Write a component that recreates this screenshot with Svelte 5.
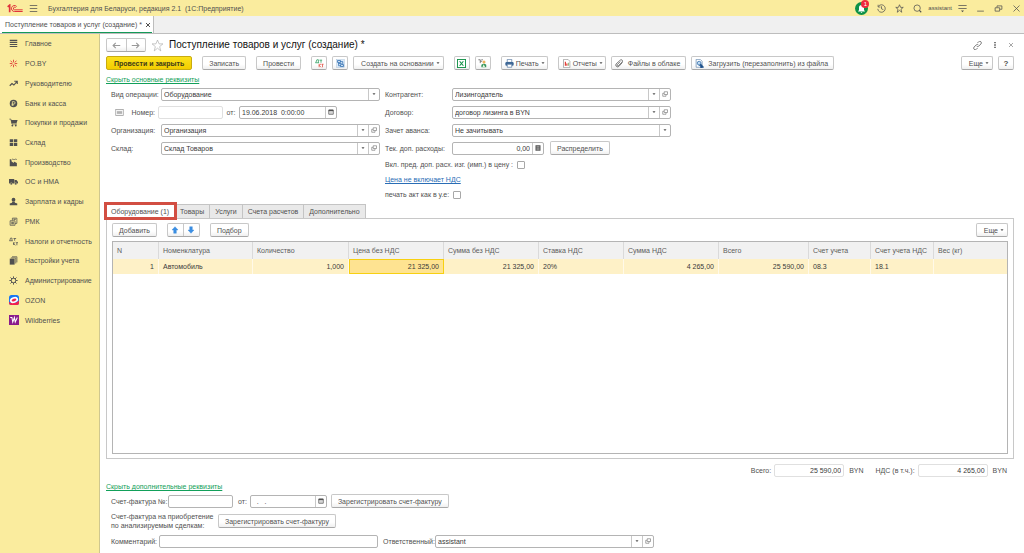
<script lang="ts">
  const sections = [
    { icon: 'lines', label: 'Главное' },
    { icon: 'spark', label: 'PO.BY' },
    { icon: 'trend', label: 'Руководителю' },
    { icon: 'coin', label: 'Банк и касса' },
    { icon: 'cart', label: 'Покупки и продажи' },
    { icon: 'store', label: 'Склад' },
    { icon: 'factory', label: 'Производство' },
    { icon: 'truck', label: 'ОС и НМА' },
    { icon: 'person', label: 'Зарплата и кадры' },
    { icon: 'register', label: 'РМК' },
    { icon: 'tax', label: 'Налоги и отчетность' },
    { icon: 'books', label: 'Настройки учета' },
    { icon: 'gear', label: 'Администрирование' },
    { icon: 'ozon', label: 'OZON' },
    { icon: 'wb', label: 'Wildberries' }
  ];

  const tabs = ['Оборудование (1)', 'Товары', 'Услуги', 'Счета расчетов', 'Дополнительно'];

  const columns = [
    { title: 'N', width: 46, value: '1', num: true },
    { title: 'Номенклатура', width: 94, value: 'Автомобиль' },
    { title: 'Количество', width: 96, value: '1,000', num: true },
    { title: 'Цена без НДС', width: 95, value: '21 325,00', num: true, current: true },
    { title: 'Сумма без НДС', width: 95, value: '21 325,00', num: true },
    { title: 'Ставка НДС', width: 85, value: '20%' },
    { title: 'Сумма НДС', width: 95, value: '4 265,00', num: true },
    { title: 'Всего', width: 90, value: '25 590,00', num: true },
    { title: 'Счет учета', width: 62, value: '08.3' },
    { title: 'Счет учета НДС', width: 63, value: '18.1' },
    { title: 'Вес (кг)', width: 73, value: '' }
  ];

  let activeTab = $state(0);
</script>

{#snippet icon(name: string)}
  <svg
    class={['icon', name]}
    viewBox="0 0 24 24"
    fill="none"
    stroke="currentColor"
    stroke-width="2"
    aria-hidden="true"
  >
    {#if name === 'lines'}
      <path d="M2 3.500h20M2 9h20M2 14.500h20M2 20h20" stroke-width="3" />
    {:else if name === 'burger'}
      <path d="M2 4h20M2 12h20M2 20h20" />
    {:else if name === 'spark'}
      <g stroke="#e0463c" stroke-width="2.500">
        <path d="M12 2v7M12 15v7M2 12h7M15 12h7M4 5l5 4M20 5l-5 4M4 19l5-4M20 19l-5-4" />
      </g>
    {:else if name === 'trend'}
      <path d="M2 18l6-6 5 4 8-9M14 6h8v7" stroke-width="3" />
    {:else if name === 'coin'}
      <circle cx="12" cy="12" r="10" fill="currentColor" stroke="none" />
      <path d="M9 18V7h4a3 3 0 0 1 0 6.500H7M7 16h6" stroke="#faec9e" />
    {:else if name === 'cart'}
      <path d="M1 3h4l3 13h13" />
      <path d="M5 5h18l-3 9H7z" fill="currentColor" stroke="none" />
      <circle cx="9" cy="20" r="2.500" fill="currentColor" stroke="none" />
      <circle cx="18" cy="20" r="2.500" fill="currentColor" stroke="none" />
    {:else if name === 'store'}
      <path d="M2 3h9v8H2zM13 3h9v8h-9zM2 13h9v8H2zM13 13h9v8h-9z" fill="currentColor" stroke="none" />
    {:else if name === 'factory'}
      <path d="M2 22V3h4l1 6 6 4V9l8 4v9z" fill="currentColor" stroke="none" />
      <path d="M8 4c3-3 4 2 7 0s4 0 6 0" />
    {:else if name === 'truck'}
      <path d="M0 5h14v12H0zM15 8h5l4 5v4h-9z" fill="currentColor" stroke="none" />
      <circle cx="6" cy="18" r="3" fill="currentColor" stroke="#faec9e" stroke-width="1" />
      <circle cx="18" cy="18" r="3" fill="currentColor" stroke="#faec9e" stroke-width="1" />
    {:else if name === 'person'}
      <circle cx="12" cy="7" r="5" fill="currentColor" stroke="none" />
      <path d="M9 12h6l1 3 6 2v5H2v-5l6-2z" fill="currentColor" stroke="none" />
    {:else if name === 'register'}
      <path d="M3 10h13v12H3zM9 9V3h12v14h-5" />
      <path d="M6 14h7M6 18h7M12 6h6" stroke-width="3" />
    {:else if name === 'tax'}
      <path d="M2 10l2-7h4v7M1 10h9M12 4h7M15 4v6M12 14v7M17 14l-5 4 5 4M19 15h5M21 15v7" />
    {:else if name === 'books'}
      <path d="M2 7h13v16H2z" fill="currentColor" stroke="none" />
      <path d="M5 5h13v15M8 2h13v15" stroke-width="2" />
    {:else if name === 'gear'}
      <circle cx="12" cy="12" r="6" stroke-width="2.500" />
      <path d="M12 1v5M12 18v5M1 12h5M18 12h5M4 4l4 4M16 16l4 4M20 4l-4 4M8 16l-4 4" stroke-width="2.500" />
    {:else if name === 'ozon'}
      <rect width="24" height="24" rx="6" fill="#1976f2" stroke="none" />
      <path d="M0 17c8 4 16 3 24-4v7q0 4-4 4H5q-5 0-5-5z" fill="#f1224e" stroke="none" />
      <ellipse cx="12" cy="12" rx="8" ry="5" stroke="#fff" stroke-width="4" fill="#f1224e" transform="rotate(-20 12 12)" />
    {:else if name === 'wb'}
      <rect width="24" height="24" fill="#8a1c8c" stroke="none" />
      <path d="M3 6h4l2 11 4-11 2 11 5-11" stroke="#fff" stroke-width="2.500" />
    {:else if name === 'recent'}
      <path d="M4 6a10 10 0 1 1-2 7M3 2v6h6M12 6v7l5 2" />
    {:else if name === 'star'}
      <path d="M12 2l3 7h7l-6 5 2 8-6-5-6 5 2-8-6-5h7z" />
    {:else if name === 'search'}
      <circle cx="11" cy="11" r="8.500" />
      <path d="M17 17l5 5" stroke-width="3" />
    {:else if name === 'filter'}
      <path d="M1 4h22M1 12h22" />
      <path d="M8 17h8l-4 5z" fill="currentColor" stroke="none" />
    {:else if name === 'minimize'}
      <path d="M3 19h18" />
    {:else if name === 'restore'}
      <path d="M3 10h12v9H3zM8 9V5h13v9h-5" />
    {:else if name === 'close'}
      <path d="M4 4l16 16M20 4L4 20" />
    {:else if name === 'link'}
      <path d="M10 14a4 4 0 0 0 5 0l6-6a4 4 0 0 0-6-6l-3 3M14 10a4 4 0 0 0-5 0l-6 6a4 4 0 0 0 6 6l3-3" />
    {:else if name === 'dots'}
      <path d="M9 0h6v5H9zM9 9h6v6H9zM9 19h6v5H9z" fill="currentColor" stroke="none" />
    {:else if name === 'left'}
      <path d="M22 12H3M10 5l-7 7 7 7" stroke-width="3" />
    {:else if name === 'right'}
      <path d="M2 12h19M14 5l7 7-7 7" stroke-width="3" />
    {:else if name === 'down'}
      <path d="M3 8h18l-9 10z" fill="currentColor" stroke="none" />
    {:else if name === 'open'}
      <path d="M9 3h13v11H9zM8 9H3v12h13v-6" />
    {:else if name === 'calendar'}
      <path d="M3 4h18v17H3z" stroke-width="3" />
      <path d="M3 3h18v6H3z" fill="currentColor" stroke="none" />
      <path d="M7 13h10M7 17h10" stroke-dasharray="2 2" />
    {:else if name === 'calc'}
      <path d="M2 1h20v22H2z" fill="currentColor" stroke="none" />
      <path d="M6 6h12M6 11h12M6 15h12M6 19h12" stroke="#fff" stroke-width="1.500" />
    {:else if name === 'dtkt'}
      <g stroke="#259b5b"><path d="M2 10l3-8h4v8M1 10h10M12 3h7M16 3v7" /></g>
      <g stroke="#e04b3c"><path d="M11 13v9M16 13l-5 4 5 5M17 14h6M20 14v8" /></g>
    {:else if name === 'structure'}
      <rect x="2" y="2" width="20" height="20" fill="#dceaf8" stroke="#91afd0" stroke-width="1" />
      <path d="M4 4h8v5H4zM12 15h8v5h-8zM7 9v9h5M12 7h6v8M7 12h8" stroke="#2868ae" />
    {:else if name === 'excel'}
      <rect x="1" y="1" width="22" height="22" fill="#fff" stroke="#149148" stroke-width="3" />
      <path d="M7 6l10 12M17 6L7 18" stroke="#149148" stroke-width="3" />
    {:else if name === 'tree'}
      <path d="M1 2h5v4h5M6 6v5M9 2h4" stroke="#555" />
      <circle cx="16" cy="8" r="4" fill="#edb15b" stroke="none" />
      <path d="M9 22v-7q7-5 13 0v7z" fill="#35965d" stroke="none" />
      <path d="M15 14l-3 7h7z" fill="#e7f2df" stroke="none" />
    {:else if name === 'printer'}
      <path d="M6 1h12v8H6z" fill="#fff" stroke="#5d7fa5" />
      <rect x="1" y="8" width="22" height="10" rx="3" fill="#3d6795" stroke="none" />
      <path d="M6 14h12v8H6z" fill="#fff" stroke="#5d7fa5" />
    {:else if name === 'report'}
      <path d="M4 1h12l5 5v17H4z" fill="#fff" stroke="#9a9a9a" />
      <path d="M9 7v11M13 12v6" stroke="#e2352c" stroke-width="3" />
      <path d="M17 10v8" stroke="#5b9c45" />
    {:else if name === 'clip'}
      <path d="M20 9l-10 11a5 5 0 0 1-7-7L14 3a3 3 0 0 1 5 5L9 18a2 2 0 0 1-3-3l8-8" />
    {:else if name === 'import'}
      <path d="M3 1h11l5 5v16H3z" fill="#fff" stroke="#6c8db1" />
      <circle cx="11" cy="11" r="5" fill="#bcd8f1" stroke="#2f6cab" />
      <path d="M10 17h8M15 13l8 9-8 1z" fill="#1c4f89" stroke="#1c4f89" />
    {:else if name === 'up-blue'}
      <path d="M12 2l9 10h-5v10H8V12H3z" fill="#3b8fe4" stroke="#2b7bd0" stroke-width="1" />
    {:else if name === 'down-blue'}
      <path d="M12 22l9-10h-5V2H8v10H3z" fill="#3b8fe4" stroke="#2b7bd0" stroke-width="1" />
    {:else if name === 'card'}
      <rect x="2" y="4" width="20" height="16" stroke="#999" />
      <path d="M5 9h14M5 12h14M5 15h14" stroke="#999" />
    {/if}
  </svg>
{/snippet}

{#snippet combo(id: string, value: string)}
  <span class="field wide">
    <input {id} type="text" {value} />
    <button class="part" aria-label="Выбрать">{@render icon('down')}</button>
    <button class="part" aria-label="Открыть">{@render icon('open')}</button>
  </span>
{/snippet}

{#snippet dropdown(id: string, value: string)}
  <span class="field wide">
    <select {id}><option>{value}</option></select>
    <span class="part">{@render icon('down')}</span>
  </span>
{/snippet}

<div class="app">
  <header class="titlebar">
    <svg class="logo" viewBox="0 0 48 26" fill="none" stroke="#e0343b" aria-hidden="true">
      <path d="M2 8l6-5v21" stroke-width="5" />
      <path d="M29 7a9 9 0 1 0-6 15h24M26 10a4 4 0 1 0-3 7h24" stroke-width="3" />
    </svg>
    <button aria-label="Меню">{@render icon('burger')}</button>
    <span class="app-name">Бухгалтерия для Беларуси, редакция 2.1&nbsp; (1С:Предприятие)</span>
    <div class="system">
      <button class="bell" aria-label="Уведомления">
        <svg viewBox="0 0 26 26" aria-hidden="true">
          <circle cx="13" cy="13" r="13" fill="#0e9247" />
          <path d="M6 19l2-3v-5q0-5 5-5t5 5v5l2 3zM11 20h4l-2 2z" fill="#fff" />
        </svg>
        <span class="badge">1</span>
      </button>
      <button aria-label="История">{@render icon('recent')}</button>
      <button aria-label="Избранное">{@render icon('star')}</button>
      <button aria-label="Поиск">{@render icon('search')}</button>
      <span class="user">assistant</span>
      <button aria-label="Настройки">{@render icon('filter')}</button>
      <button aria-label="Свернуть">{@render icon('minimize')}</button>
      <button aria-label="Развернуть">{@render icon('restore')}</button>
      <button aria-label="Закрыть">{@render icon('close')}</button>
    </div>
  </header>

  <div class="windows">
    <div class="window-tab">
      <span>Поступление товаров и услуг (создание) *</span>
      <button class="small" aria-label="Закрыть вкладку">{@render icon('close')}</button>
    </div>
  </div>

  <div class="body">
    <nav>
      <ul>
        {#each sections as section}
          <li><a href="#top">{@render icon(section.icon)}<span>{section.label}</span></a></li>
        {/each}
      </ul>
    </nav>

    <main>
      <div class="heading">
        <div class="pair history">
          <button aria-label="Назад">{@render icon('left')}</button>
          <button aria-label="Вперед">{@render icon('right')}</button>
        </div>
        <button class="favorite" aria-label="В избранное">{@render icon('star')}</button>
        <h1>Поступление товаров и услуг (создание) *</h1>
        <div class="form-tools">
          <button aria-label="Ссылка">{@render icon('link')}</button>
          <button class="small" aria-label="Еще">{@render icon('dots')}</button>
          <button class="small" aria-label="Закрыть">{@render icon('close')}</button>
        </div>
      </div>

      <div class="toolbar">
        <button class="btn primary">Провести и закрыть</button>
        <button class="btn">Записать</button>
        <button class="btn">Провести</button>
        <button class="btn square" aria-label="Дт Кт">{@render icon('dtkt')}</button>
        <button class="btn square joined" aria-label="Структура">{@render icon('structure')}</button>
        <button class="btn menu joined">Создать на основании {@render icon('down')}</button>
        <button class="btn square" aria-label="Excel">{@render icon('excel')}</button>
        <button class="btn square joined" aria-label="Дерево">{@render icon('tree')}</button>
        <button class="btn menu picture">{@render icon('printer')}<span>Печать</span>{@render icon('down')}</button>
        <button class="btn menu picture">{@render icon('report')}<span>Отчеты</span>{@render icon('down')}</button>
        <button class="btn picture joined">{@render icon('clip')}<span>Файлы в облаке</span></button>
        <button class="btn picture joined">
          {@render icon('import')}<span>Загрузить (перезаполнить) из файла</span>
        </button>
        <button class="btn menu last">Еще {@render icon('down')}</button>
        <button class="btn square joined help">?</button>
      </div>

      <a class="toggle" href="#main">Скрыть основные реквизиты</a>

      <div class="details">
        <div class="left">
          <div class="row">
            <label for="kind">Вид операции:</label>
            {@render dropdown('kind', 'Оборудование')}
          </div>
          <div class="row">
            <label class="number" for="number">{@render icon('card')} Номер:</label>
            <span class="field pale doc"><input id="number" type="text" /></span>
            <label class="from" for="date">от:</label>
            <span class="field date">
              <input id="date" type="text" value="19.06.2018  0:00:00" />
              <button class="part" aria-label="Календарь">{@render icon('calendar')}</button>
            </span>
          </div>
          <div class="row">
            <label for="org">Организация:</label>
            {@render combo('org', 'Организация')}
          </div>
          <div class="row">
            <label for="stock">Склад:</label>
            {@render combo('stock', 'Склад Товаров')}
          </div>
        </div>

        <div class="right">
          <div class="row">
            <label for="partner">Контрагент:</label>
            {@render combo('partner', 'Лизингодатель')}
          </div>
          <div class="row">
            <label for="contract">Договор:</label>
            {@render combo('contract', 'договор лизинга в BYN')}
          </div>
          <div class="row">
            <label for="advance">Зачет аванса:</label>
            {@render dropdown('advance', 'Не зачитывать')}
          </div>
          <div class="row">
            <label for="costs">Тек. доп. расходы:</label>
            <span class="field costs">
              <input id="costs" class="num" type="text" value="0,00" />
              <button class="part" aria-label="Калькулятор">{@render icon('calc')}</button>
            </span>
            <button class="btn distribute">Распределить</button>
          </div>
          <div class="row check">
            <label for="include">Вкл. пред. доп. расх. изг. (имп.) в цену :</label>
            <input id="include" type="checkbox" />
          </div>
          <div class="row check"><a class="price" href="#price">Цена не включает НДС</a></div>
          <div class="row check">
            <label for="act">печать акт как в у.е:</label>
            <input id="act" type="checkbox" />
          </div>
        </div>
      </div>

      <div class="tabs" role="tablist">
        {#each tabs as tab, i}
          <button
            role="tab"
            class:active={activeTab === i}
            class:marked={i === 0}
            aria-selected={activeTab === i}
            onclick={() => (activeTab = i)}>{tab}</button
          >
        {/each}
      </div>

      <section class="panel">
        <div class="toolbar">
          <button class="btn">Добавить</button>
          <div class="pair move">
            <button aria-label="Вверх">{@render icon('up-blue')}</button>
            <button aria-label="Вниз">{@render icon('down-blue')}</button>
          </div>
          <button class="btn">Подбор</button>
          <button class="btn menu last">Еще {@render icon('down')}</button>
        </div>
        <div class="grid">
          <table>
            <colgroup>
              {#each columns as column}
                <col style:width="{column.width}px" />
              {/each}
            </colgroup>
            <thead>
              <tr>
                {#each columns as column}
                  <th>{column.title}</th>
                {/each}
              </tr>
            </thead>
            <tbody>
              <tr>
                {#each columns as column}
                  <td class:num={column.num} class:current={column.current}>{column.value}</td>
                {/each}
              </tr>
            </tbody>
          </table>
        </div>
      </section>

      <div class="totals">
        <label for="total">Всего:</label>
        <span class="field pale sum"><input id="total" class="num" value="25 590,00" readonly /></span>
        <span class="currency">BYN</span>
        <label for="vat">НДС (в т.ч.):</label>
        <span class="field pale sum"><input id="vat" class="num" value="4 265,00" readonly /></span>
        <span class="currency">BYN</span>
      </div>

      <a class="toggle" href="#extra">Скрыть дополнительные реквизиты</a>

      <div class="extra">
        <div class="row">
          <label class="invoice-label" for="invoice">Счет-фактура №:</label>
          <span class="field invoice"><input id="invoice" type="text" /></span>
          <label for="invoice-date">от:</label>
          <span class="field invoice-date">
            <input id="invoice-date" type="text" value="  .   ." />
            <button class="part" aria-label="Календарь">{@render icon('calendar')}</button>
          </span>
          <button class="btn">Зарегистрировать счет-фактуру</button>
        </div>
        <div class="row">
          <span class="note">Счет-фактура на приобретение<br />по анализируемым сделкам:</span>
          <button class="btn">Зарегистрировать счет-фактуру</button>
        </div>
        <div class="row">
          <label class="comment-label" for="comment">Комментарий:</label>
          <span class="field wide"><input id="comment" type="text" /></span>
          <label class="owner" for="owner">Ответственный:</label>
          {@render combo('owner', 'assistant')}
        </div>
      </div>
    </main>
  </div>
</div>

<style>
  :global(body) {
    background: #fff;
  }

  .app {
    --yellow: #faec9e;
    --line: #b4b4b4;
    min-height: 100vh;
    display: flex;
    flex-direction: column;
    font: 7px/9px 'Liberation Sans', Arial, sans-serif;
    color: #505050;
  }

  .app :where(*) {
    box-sizing: border-box;
  }

  button,
  input,
  select {
    font: inherit;
    color: inherit;
    margin: 0;
    padding: 0;
    border: 0;
    background: none;
  }

  button {
    display: flex;
    align-items: center;
    justify-content: center;
    white-space: nowrap;
  }

  label,
  h1 {
    white-space: nowrap;
  }

  .icon {
    width: 9px;
    height: 9px;
    flex: none;
  }

  .small .icon {
    width: 6px;
    height: 6px;
  }

  .titlebar {
    height: 16px;
    display: flex;
    align-items: center;
    padding: 0 3px 0 7px;
    background: var(--yellow);
  }

  .logo {
    width: 16px;
    height: 9px;
    margin-right: 6px;
  }

  .app-name {
    margin-left: 10px;
  }

  .system {
    margin-left: auto;
    display: flex;
    align-items: center;
    gap: 9px;
  }

  .user {
    margin: 0 -3px;
    font-size: 6px;
  }

  .bell {
    position: relative;
  }

  .bell svg {
    width: 13px;
    height: 13px;
  }

  .badge {
    position: absolute;
    top: -2px;
    right: -1px;
    width: 8px;
    height: 8px;
    border-radius: 50%;
    background: #ef2b3c;
    color: #fff;
    font-size: 6px;
    line-height: 8px;
    text-align: center;
  }

  .windows {
    height: 18px;
    display: flex;
    background: #f0f0f0;
    border-bottom: 1px solid #bdbdbd;
  }

  .window-tab {
    display: flex;
    align-items: center;
    gap: 3px;
    padding: 0 2px 0 5px;
    background: linear-gradient(#149a58, #149a58) 2px 100% / calc(100% - 3px) 1px no-repeat #fff;
    border-right: 1px solid #bdbdbd;
  }

  .window-tab .icon {
    stroke-width: 4;
  }

  .body {
    flex: 1;
    display: flex;
  }

  nav {
    width: 100px;
    flex: none;
    background: var(--yellow);
    border-right: 1px solid #cfc78f;
  }

  ul {
    height: 296px;
    display: grid;
    grid-auto-rows: 1fr;
    margin: 0;
    padding: 0;
    list-style: none;
  }

  nav a {
    height: 100%;
    display: flex;
    align-items: center;
    gap: 7px;
    padding-left: 9px;
    color: inherit;
    text-decoration: none;
    white-space: nowrap;
  }

  nav .ozon,
  nav .wb {
    width: 10px;
    height: 10px;
    margin-right: -1px;
  }

  main {
    flex: 1;
    min-width: 0;
    padding: 4px 10px 4px 6px;
  }

  .heading {
    height: 14px;
    display: flex;
    align-items: center;
  }

  .pair {
    height: 14px;
    display: flex;
    border: 1px solid #c8c8c8;
    border-bottom-color: #a8a8a8;
    border-radius: 2px;
    background: linear-gradient(#fff 60%, #f0f0f0);
  }

  .pair button {
    flex: 1;
  }

  .pair button + button {
    border-left: 1px solid #c8c8c8;
  }

  .history {
    width: 40px;
    color: #999;
  }

  .favorite {
    margin: 0 5px;
    color: #999;
  }

  .favorite .icon {
    width: 13px;
    height: 13px;
    stroke-width: 1;
  }

  h1 {
    margin: 0;
    font-size: 10px;
    line-height: 14px;
    font-weight: normal;
    color: #111;
  }

  .form-tools {
    margin-left: auto;
    display: flex;
    align-items: center;
    gap: 10px;
  }

  .toolbar {
    display: flex;
    align-items: center;
    gap: 10px;
  }

  .heading + .toolbar {
    margin-top: 4px;
  }

  .btn {
    height: 14px;
    padding: 0 6px;
    border: 1px solid #c8c8c8;
    border-bottom-color: #a8a8a8;
    border-radius: 2px;
    background: linear-gradient(#fff 60%, #f0f0f0);
  }

  .primary {
    padding: 0 7px;
    background: linear-gradient(#fbe11c, #f3cd00);
    border-color: #c9ab10;
    color: #403a18;
    font-weight: bold;
  }

  .square {
    width: 16px;
    padding: 0;
  }

  .joined {
    margin-left: -5px;
  }

  .btn.menu {
    padding: 0 3px 0 7px;
    gap: 2px;
  }

  .btn .down {
    width: 4px;
    height: 4px;
  }

  .btn.picture {
    padding: 0 5px 0 3px;
    gap: 4px;
  }

  .btn.menu.picture {
    padding-right: 2px;
    gap: 2px;
  }

  .last {
    margin-left: auto;
  }

  .help {
    font-size: 8px;
    font-weight: bold;
  }

  .toggle {
    display: table;
    margin-top: 5px;
    color: #12a05a;
  }

  .details {
    display: flex;
    gap: 5px;
    margin-top: 1px;
    padding-left: 5px;
    min-height: 119px;
  }

  .row {
    height: 18px;
    display: flex;
    align-items: center;
  }

  .row.check {
    height: 15px;
  }

  .left label {
    width: 50px;
  }

  .left label.number {
    width: 47px;
    display: flex;
    justify-content: space-between;
    padding: 0 3px 0 4px;
  }

  .left label.from {
    width: 16px;
    text-align: center;
  }

  .right label {
    width: 67px;
  }

  .right .check label {
    width: auto;
    margin-right: 4px;
  }

  .field {
    height: 13px;
    display: flex;
    border: 1px solid var(--line);
    border-radius: 2px;
    background: #fff;
  }

  .field input,
  .field select {
    flex: 1;
    min-width: 0;
    padding: 0 2px;
    color: #3a3a3a;
    appearance: none;
    white-space: pre;
    outline: none;
  }

  .field .num {
    text-align: right;
  }

  .wide {
    width: 219px;
  }

  .pale {
    border-color: #e0e0e0;
  }

  .doc {
    width: 65px;
  }

  .date {
    width: 98px;
  }

  .costs {
    width: 92px;
  }

  .part {
    width: 11px;
    display: flex;
    align-items: center;
    justify-content: center;
    border-left: 1px solid #c8c8c8;
  }

  .part .icon {
    width: 6px;
    height: 6px;
  }

  .part .down {
    width: 4px;
    height: 4px;
  }

  .distribute {
    margin-left: 6px;
  }

  input[type='checkbox'] {
    width: 8px;
    height: 8px;
    border: 1px solid #a8a8a8;
    border-radius: 1px;
    appearance: none;
  }

  .price {
    color: #2a6db5;
  }

  .tabs {
    display: flex;
    height: 14px;
  }

  .tabs button {
    padding: 0 5px;
    background: #e9e9e9;
    border: 1px solid #c4c4c4;
    border-width: 1px 1px 0 0;
  }

  .tabs button.active {
    background: #fff;
  }

  .tabs .marked {
    outline: 3px solid #d24e42;
    outline-offset: -1px;
    z-index: 1;
  }

  .panel {
    display: flex;
    flex-direction: column;
    gap: 4px;
    padding: 4px 5px;
    border: 1px solid #c8c8c8;
  }

  .move {
    width: 33px;
  }

  .move .icon {
    width: 8px;
    height: 8px;
  }

  .grid {
    min-height: 213px;
    border: 1px solid #b4b4b4;
  }

  table {
    width: 100%;
    table-layout: fixed;
    border-collapse: separate;
    border-spacing: 0;
  }

  th,
  td {
    padding: 0 4px;
    font-weight: normal;
    text-align: left;
    white-space: nowrap;
  }

  th {
    height: 17px;
    background: #f1f1f1;
    border-right: 1px solid #dadada;
    color: #5c5c5c;
  }

  td {
    height: 15px;
    background: #fef1c7;
    border-right: 1px solid #fff9e8;
    color: #3a3a3a;
  }

  th:last-child,
  td:last-child {
    border-right: 0;
  }

  td.num {
    text-align: right;
  }

  td.current {
    background: #fee391;
    border: 1px solid #f7d011;
  }

  .totals {
    display: flex;
    align-items: center;
    justify-content: flex-end;
    margin: 5px 7px 0 0;
  }

  .totals .field {
    margin: 0 5px 0 3px;
  }

  .sum {
    width: 70px;
  }

  .currency + label {
    margin-left: 12px;
  }

  .extra {
    padding-left: 5px;
  }

  .extra .row {
    height: 20px;
  }

  .invoice-label {
    width: 57px;
  }

  .invoice {
    width: 65px;
    margin-right: 5px;
  }

  .invoice-date {
    width: 77px;
    margin: 0 4px 0 3px;
  }

  .note {
    width: 107px;
    white-space: nowrap;
  }

  .comment-label {
    width: 48px;
  }

  .owner {
    width: 52px;
    margin-left: 5px;
  }
</style>
